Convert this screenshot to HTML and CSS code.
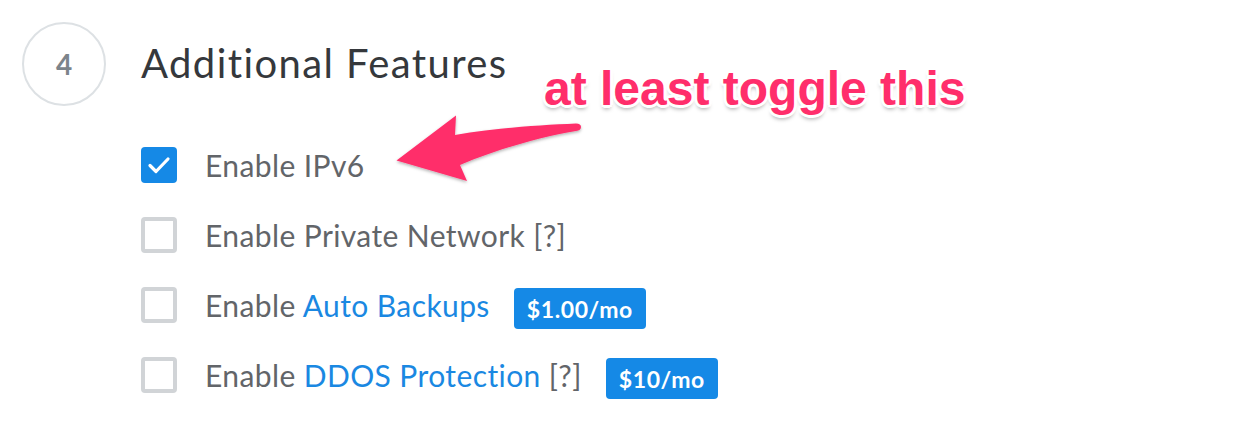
FILE: index.html
```html
<!DOCTYPE html>
<html>
<head>
<meta charset="utf-8">
<link rel="stylesheet" href="styles.css">
</head>
<body>
<div class="step">
  <div class="step-num">4</div>
  <div class="step-body">
    <h2 class="step-title">Additional Features</h2>
    <ul class="features">
      <li class="feature">
        <span class="check checked"><svg viewBox="0 0 36 36" width="36" height="36"><path d="M9 18.5l6 6L27 12" fill="none" stroke="#fff" stroke-width="3.2" stroke-linecap="round" stroke-linejoin="round"/></svg></span>
        <span class="label">Enable IPv6</span>
      </li>
      <li class="feature">
        <span class="check"></span>
        <span class="label">Enable Private Network [?]</span>
      </li>
      <li class="feature">
        <span class="check"></span>
        <span class="label">Enable <a class="link">Auto Backups</a></span>
        <span class="badge">$1.00/mo</span>
      </li>
      <li class="feature">
        <span class="check"></span>
        <span class="label">Enable <a class="link">DDOS Protection</a> [?]</span>
        <span class="badge">$10/mo</span>
      </li>
    </ul>
  </div>
</div>
<div class="note">at least toggle this</div>
<svg class="arrow" width="1254" height="424" viewBox="0 0 1254 424">
  <defs>
    <filter id="sh" x="-20%" y="-20%" width="140%" height="140%">
      <feDropShadow dx="0" dy="1.5" stdDeviation="1.5" flood-color="#000" flood-opacity="0.3"/>
    </filter>
  </defs>
  <path filter="url(#sh)" fill="#ff2e6b" d="M396.5 160.5 L456 115.5 L455 135 C495 128 540 125 576 123.5 Q581 123.5 581 127 Q581 130.5 576 131 C540 137 495 150 460 165 L467 181 Z"/>
</svg>
</body>
</html>
```
FILE: styles.css
```css
html, body {
  margin: 0;
  padding: 0;
  background: #fff;
}
body {
  width: 1254px;
  height: 424px;
  overflow: hidden;
  position: relative;
  font-family: Lato, "Open Sans", sans-serif;
}
.step {
  display: flex;
  align-items: flex-start;
  padding: 22px 0 0 22px;
}
.step-num {
  width: 80px;
  height: 80px;
  border: 2px solid #dde1e4;
  border-radius: 50%;
  display: flex;
  align-items: center;
  justify-content: center;
  font-size: 28px;
  font-weight: 700;
  color: #7c848b;
  flex: none;
}
.step-body {
  margin-left: 35px;
}
.step-title {
  margin: 0;
  height: 82px;
  line-height: 82px;
  font-size: 40px;
  font-weight: 400;
  color: #35383c;
  letter-spacing: 1.4px;
}
.features {
  list-style: none;
  margin: 43px 0 0 0;
  padding: 0;
  display: flex;
  flex-direction: column;
  gap: 34px;
}
.feature {
  display: flex;
  align-items: center;
  height: 36px;
}
.check {
  width: 28px;
  height: 28px;
  border: 4px solid #d1d4d7;
  border-radius: 4px;
  flex: none;
  display: block;
}
.check.checked {
  width: 36px;
  height: 36px;
  border: none;
  background: #1589e6;
}
.check svg {
  display: block;
}
.label {
  margin-left: 28px;
  font-size: 30px;
  letter-spacing: 0.4px;
  color: #626569;
  white-space: nowrap;
}
.link {
  color: #1a88e2;
  text-decoration: none;
}
.badge {
  margin-left: 24px;
  height: 41px;
  padding: 0 13px;
  display: flex;
  align-items: center;
  background: #1589e6;
  border-radius: 4px;
  color: #fff;
  font-size: 23px;
  font-weight: 700;
  letter-spacing: 0.6px;
  margin-top: 7px;
}
.note {
  position: absolute;
  left: 544px;
  top: 61px;
  font-family: "Liberation Sans", Arial, sans-serif;
  font-weight: 700;
  font-size: 48px;
  color: #ff2e6b;
  white-space: nowrap;
  text-shadow:
    2px 0 0 #fff, -2px 0 0 #fff, 0 2px 0 #fff, 0 -2px 0 #fff,
    2px 2px 0 #fff, -2px -2px 0 #fff, 2px -2px 0 #fff, -2px 2px 0 #fff,
    3px 0 0 #fff, -3px 0 0 #fff, 0 3px 0 #fff, 0 -3px 0 #fff,
    0 4px 4px rgba(0,0,0,0.35);
}
.arrow {
  position: absolute;
  left: 0;
  top: 0;
  pointer-events: none;
}
```
